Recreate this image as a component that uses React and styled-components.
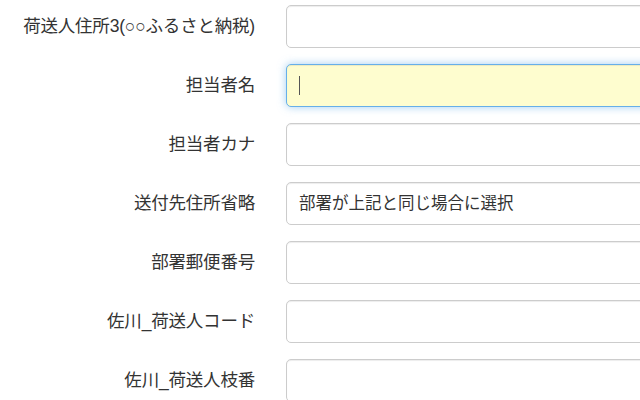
import styled, { createGlobalStyle } from "styled-components";

const GlobalStyle = createGlobalStyle`
    body {
        margin: 0;
        background: #fff;
        overflow: hidden;
        font-family: "Liberation Sans", "Noto Sans CJK JP", sans-serif;
    }
`

const rows = [
    { label: "荷送人住所3(○○ふるさと納税)" },
    { label: "担当者名", focus: true },
    { label: "担当者カナ" },
    { label: "送付先住所省略", text: "部署が上記と同じ場合に選択" },
    { label: "部署郵便番号" },
    { label: "佐川_荷送人コード" },
    { label: "佐川_荷送人枝番" },
]

const App = () => {
    return (
        <>
            <GlobalStyle />
            <Form>
                {rows.map((r) => (
                    <Row key={r.label}>
                        <Label>{r.label}</Label>
                        <Field $focus={r.focus}>
                            {r.focus && <Caret />}
                            {r.text}
                        </Field>
                    </Row>
                ))}
            </Form>
        </>
    );
}

export default App;


const Form = styled.div `
    padding-top: 5px;
    display: flex;
    flex-direction: column;
    gap: 16px;
`

const Row = styled.div `
    display: grid;
    grid-template-columns: 255px 420px;
    column-gap: 31px;
    align-items: center;
`

const Label = styled.label `
    text-align: right;
    font-size: 17.5px;
    line-height: 1;
    color: #333;
    white-space: nowrap;
    letter-spacing: -0.2px;
`

const Field = styled.div `
    box-sizing: border-box;
    height: 43px;
    display: flex;
    align-items: center;
    padding: 0 12px;
    font-size: 16.5px;
    line-height: 1;
    color: #333;
    border-radius: 5px;
    border: 1px solid ${(p) => (p.$focus ? "#66afe9" : "#ccc")};
    background: ${(p) => (p.$focus ? "#fefdcf" : "#fff")};
    box-shadow: ${(p) => (p.$focus
        ? "inset 0 1px 1px rgba(0,0,0,.075), 0 0 8px rgba(102,175,233,.6)"
        : "inset 0 1px 1px rgba(0,0,0,.075)")};
`

const Caret = styled.span `
    width: 1px;
    height: 19px;
    background: #555;
`
